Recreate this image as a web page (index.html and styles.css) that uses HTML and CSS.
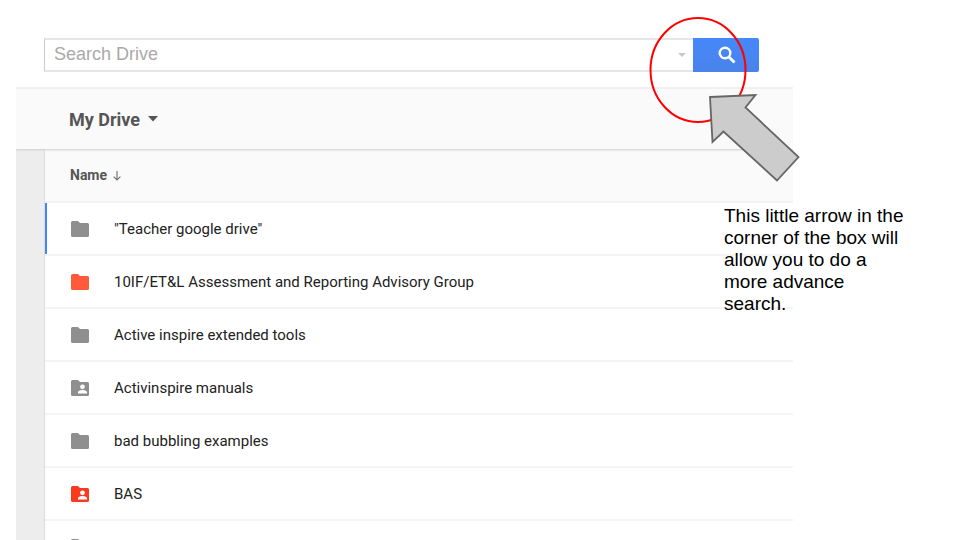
FILE: index.html
```html
<!doctype html>
<html lang="en">
<head>
<meta charset="utf-8">
<meta name="viewport" content="width=device-width, initial-scale=1">
<title>My Drive - advanced search</title>
<link rel="stylesheet" href="styles.css">
</head>
<body>

<!-- icons used more than once -->
<svg class="defs" aria-hidden="true">
  <symbol id="folder" viewBox="0 0 18 16">
    <path d="M1.5 0H7l2 2h7.500q1.500 0 1.500 1.500v11q0 1.500-1.500 1.500h-15Q0 16 0 14.500v-13Q0 0 1.500 0z"/>
  </symbol>
  <symbol id="shared" viewBox="0 0 18 16">
    <path d="M1.500 0H7l2 2h7.500q1.500 0 1.500 1.500v11q0 1.500-1.500 1.500h-15Q0 16 0 14.500v-13Q0 0 1.500 0z"/>
    <circle cx="11.500" cy="6.800" r="2.400" fill="#fff"/>
    <path d="M7 13.500v-1.200c0-1.600 3-2.400 4.500-2.400s4.500.8 4.500 2.400v1.200z" fill="#fff"/>
  </symbol>
</svg>

<main class="drive">
  <form class="search">
    <input type="text" class="search-text" placeholder="Search Drive" aria-label="Search Drive">
    <button type="button" class="search-more" aria-label="Search options">
      <svg width="8" height="4" viewBox="0 0 8 4"><path d="M0 0h8L4 4z" fill="#c8c8c8"/></svg>
    </button>
    <button type="button" class="search-go" aria-label="Search">
      <svg width="18" height="18" viewBox="0 0 18 18" fill="none" stroke="#fff">
        <circle cx="7" cy="7" r="5.300" stroke-width="2.400"/>
        <path d="M10.500 10.500l6 6" stroke-width="2.800"/>
      </svg>
    </button>
  </form>

  <header class="bar">
    <button type="button" class="crumb">My Drive
      <svg width="10" height="6" viewBox="0 0 10 6"><path d="M0 0h10L5 5.500z" fill="#555"/></svg>
    </button>
  </header>

  <div class="content">
    <table class="files">
      <thead>
        <tr><th colspan="2" scope="col">Name
          <svg width="8" height="10" viewBox="0 0 8 10" fill="none" stroke="#777" stroke-width="1.200"><path d="M4 0v9M.6 5.600L4 9l3.400-3.400"/></svg>
        </th></tr>
      </thead>
      <tbody>
        <tr class="current"><td class="icon"><svg><use href="#folder"/></svg></td><td>"Teacher google drive"</td></tr>
        <tr><td class="icon orange"><svg><use href="#folder"/></svg></td><td>10IF/ET&amp;L Assessment and Reporting Advisory Group</td></tr>
        <tr><td class="icon"><svg><use href="#folder"/></svg></td><td>Active inspire extended tools</td></tr>
        <tr><td class="icon"><svg><use href="#shared"/></svg></td><td>Activinspire manuals</td></tr>
        <tr><td class="icon"><svg><use href="#folder"/></svg></td><td>bad bubbling examples</td></tr>
        <tr><td class="icon red"><svg><use href="#shared"/></svg></td><td>BAS</td></tr>
        <tr><td class="icon"><svg><use href="#folder"/></svg></td><td></td></tr>
      </tbody>
    </table>
  </div>

  <!-- circle and arrow drawn over the search box -->
  <svg class="pointer" width="152" height="168" viewBox="0 0 152 168" aria-hidden="true">
    <ellipse cx="50" cy="54" rx="47.500" ry="52" fill="none" stroke="#f00" stroke-width="2"/>
    <path d="M62 81l45.500-2-10 12.500 53 49.500-21.500 23.500L75.500 115.500 64.500 126z" fill="#ccc" stroke="#666" stroke-width="1.800"/>
  </svg>
  <p class="note">This little arrow in the corner of the box will allow you to do a more advance search.</p>
</main>

</body>
</html>
```
FILE: styles.css
```css
html, body { height:100% }
body { margin:0; overflow:hidden; background:#fff; color:#222; font-family:Roboto, sans-serif; font-size:14px }
button { border:0; padding:0; background:none; font:inherit; color:inherit; cursor:pointer }
.defs { position:absolute; width:0; height:0 }

.drive { position:relative; margin:0 167px 0 16px; padding-top:38px }

/* search box */
.search { display:flex; height:34px; margin:0 34px 15px 28px }
.search-text { flex:1; min-width:0; box-sizing:border-box; border:solid #e6e6e6; border-width:2px 0 2px 1px; border-left-color:#ccc; padding:0 9px 2px; background:#fff; font-family:"Liberation Sans", Arial, sans-serif; font-size:18px; color:#222 }
.search-text::placeholder { color:#aaa; opacity:1 }
.search-more { display:flex; align-items:center; justify-content:center; width:22px; box-sizing:border-box; border:solid #e6e6e6; border-width:2px 0 }
.search-go { display:flex; align-items:center; justify-content:center; width:66px; padding-left:2px; box-sizing:border-box; border-radius:0 2px 2px 0; background:linear-gradient(#4588fb, #4a83ea) }

/* title bar */
.bar { position:relative; display:flex; align-items:center; height:60px; padding-left:53px; border-top:2px solid #f0f0f0; background:#fafafa; box-shadow:0 1px 2px #ccc; clip-path:inset(0 0 -4px) }
.crumb { display:flex; align-items:center; gap:8px; font-size:18px; font-weight:bold; color:#555 }

/* file list */
.content { padding-left:28px; background:#ededed }
.files { width:100%; border-collapse:separate; border-spacing:0; border-left:1px solid #ddd; background:#fff }
.files th { height:52px; padding:0 0 0 25px; border-bottom:2px solid #f4f4f4; background:#fafafa; text-align:left; font-size:14px; font-weight:bold; color:#555 }
.files th svg { margin-left:2px; vertical-align:-1px }
.files td { height:50px; padding:1px 0 0; border-bottom:2px solid #f4f4f4; font-size:15px }
.files .icon { width:43px; padding-left:26px; fill:#8f8f8f }
.files .orange { fill:#ff5a3c }
.files .red { fill:#fa3a1e }
.icon svg { display:block; width:18px; height:16px }
.current .icon { box-shadow:inset 2px 0 #4285f4 }

/* annotation */
.pointer { position:absolute; top:16px; right:-7px }
.note { position:absolute; top:205px; right:-117px; width:186px; margin:0; font-family:"Liberation Sans", Arial, sans-serif; font-size:19px; line-height:22px; color:#000 }
```
